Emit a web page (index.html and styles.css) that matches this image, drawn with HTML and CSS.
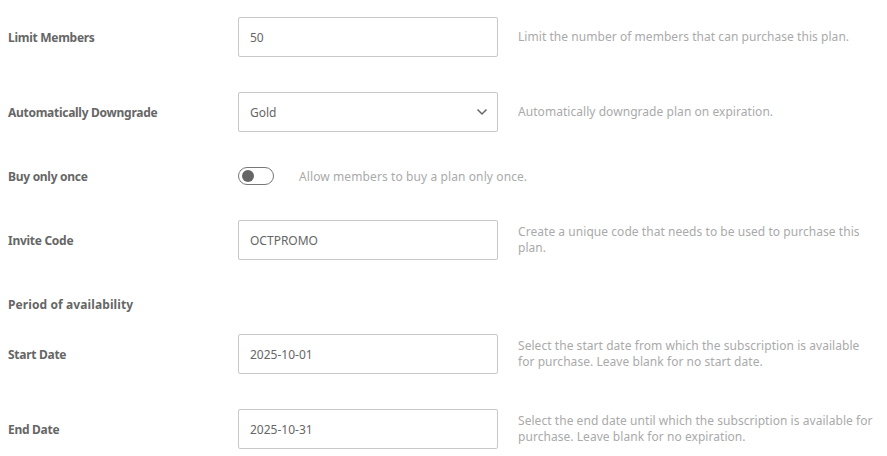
FILE: index.html
```html
<!DOCTYPE html>
<html>
<head>
<meta charset="utf-8">
<link rel="stylesheet" href="styles.css">
</head>
<body>
<div class="form">
  <div class="row r1">
    <div class="label">Limit Members</div>
    <div class="field"><div class="input">50</div></div>
    <div class="desc">Limit the number of members that can purchase this plan.</div>
  </div>
  <div class="row r2">
    <div class="label">Automatically Downgrade</div>
    <div class="field"><div class="input select">Gold
      <svg class="chev" width="12" height="8" viewBox="0 0 12 8"><path d="M1.5 1.5 L6 6 L10.5 1.5" fill="none" stroke="#666" stroke-width="1.5"/></svg>
    </div></div>
    <div class="desc">Automatically downgrade plan on expiration.</div>
  </div>
  <div class="row r3">
    <div class="label">Buy only once</div>
    <div class="toggle-wrap">
      <span class="toggle"><span class="knob"></span></span>
      <span class="toggle-text">Allow members to buy a plan only once.</span>
    </div>
  </div>
  <div class="row r4">
    <div class="label">Invite Code</div>
    <div class="field"><div class="input">OCTPROMO</div></div>
    <div class="desc">Create a unique code that needs to be used to purchase this plan.</div>
  </div>
  <div class="heading">Period of availability</div>
  <div class="row r5">
    <div class="label">Start Date</div>
    <div class="field"><div class="input">2025-10-01</div></div>
    <div class="desc">Select the start date from which the subscription is available for purchase. Leave blank for no start date.</div>
  </div>
  <div class="row r6">
    <div class="label">End Date</div>
    <div class="field"><div class="input">2025-10-31</div></div>
    <div class="desc">Select the end date until which the subscription is available for purchase. Leave blank for no expiration.</div>
  </div>
</div>
</body>
</html>
```
FILE: styles.css
```css
html, body { margin: 0; padding: 0; background: #fff; }
body { font-family: "Noto Sans", "DejaVu Sans", sans-serif; font-size: 12px; color: #666; }
.form { padding: 17px 8px 0 8px; display: flex; flex-direction: column; }
.row { display: flex; align-items: center; min-height: 40px; }
.r2 { margin-top: 35px; }
.r3 { margin-top: 24px; }
.r4 { margin-top: 24px; }
.r5 { margin-top: 19px; }
.r6 { margin-top: 35px; }
.label { width: 230px; flex: none; font-weight: bold; color: #666; font-size: 12px; letter-spacing: -0.28px; }
.field { width: 260px; flex: none; }
.input { box-sizing: border-box; height: 40px; border: 1px solid #c8c8c8; border-radius: 2px; padding: 0 11px; display: flex; align-items: center; color: #666; font-size: 12px; }
.select { justify-content: space-between; }
.chev { margin-right: -2px; }
.desc { margin-left: 20px; width: 358px; color: #aaa; font-size: 12px; line-height: 16px; letter-spacing: 0.05px; }
.toggle-wrap { display: flex; align-items: center; }
.toggle { box-sizing: border-box; width: 36px; height: 18px; border: 1px solid #777; border-radius: 9px; display: flex; align-items: center; padding-left: 3px; }
.knob { width: 12px; height: 12px; border-radius: 50%; background: #666; }
.toggle-text { margin-left: 25px; color: #aaa; letter-spacing: 0.1px; }
.heading { margin-top: 35px; height: 20px; line-height: 20px; font-weight: bold; font-size: 12px; color: #666; letter-spacing: 0.1px; }
```
